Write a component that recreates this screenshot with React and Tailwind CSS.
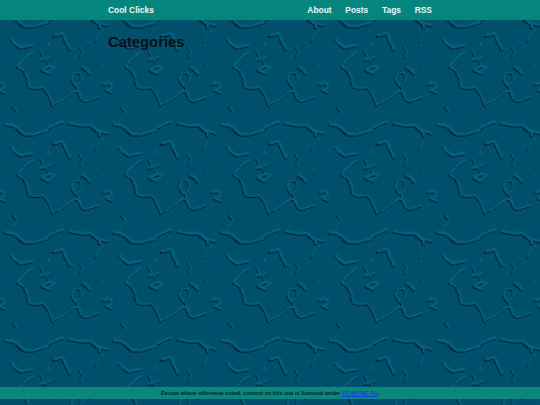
const LINES = [
  ["M6 124 Q12 124 17 127 Q21 131 25 134 L34 134 L44 131 Q50 126 56 124 L63 121", 2.8],
  ["M70 123 L80 125 L91 125 Q96 128 100 134", 2.8],
  ["M13 39 Q16 45 21 47 L33 45", 3],
  ["M33 52 L25 58 L18 66 L23 70 Q26 74 28 78", 2.4],
  ["M28 78 L29 84 Q31 88 36 88 L43 87 Q47 90 49 95 L53 105 L59 102 L68 96 L74 91 L78 91 L82 99 L86 101 L98 97", 2],
  ["M41 51 L44 57 L41 60 L47 59 L50 56", 1.8],
  ["M42 69 L49 73 L55 67 L49 66 Z", 2.6],
  ["M47 60 L49 66", 1.2],
  ["M50 58 L58 52", 0.9],
  ["M55 35 L63 33 L66 41 L71 49", 2.6],
  ["M80 46 L82 51 L81 57", 1.8],
  ["M83 67 L87 69 L90 73", 3],
  ["M72 80 Q72 72 78 72 Q83 74 81 80 Q79 85 75 85 Z", 1.8],
  ["M77 85 L79 92", 1.6],
  ["M104 84 L111 82 L112 88 L107 90 L112 92", 2.6],
  ["M13 106 L17 112 L13 118 L10 125", 1.6],
  ["M93 20 L100 23 L108 25", 2.6],
  ["M103 30 L99 35 L96 41", 1.8],
  ["M96 62 L99 66", 0.7],
];
const OFFSETS = [
  [0, 0],
  [-108, 0],
  [108, 0],
  [0, -108],
  [0, 108],
];

function Layer({ dx, dy, color, extra }) {
  return (
    <g transform={`translate(${dx} ${dy})`} stroke={color}>
      {LINES.map(([d, w]) => (
        <path key={d} d={d} strokeWidth={w + extra} />
      ))}
    </g>
  );
}

function Tile() {
  return (
    <g filter="url(#rough)">
      {OFFSETS.map(([x, y]) => (
        <g key={`${x}-${y}`} transform={`translate(${x} ${y})`} fill="none" strokeLinecap="round" strokeLinejoin="round">
          <Layer dx={-0.8} dy={1.2} color="#01293d" extra={0.1} />
          <Layer dx={0} dy={0} color="#06607f" extra={0} />
          <circle cx="49" cy="44" r="1.6" fill="#076484" />
        </g>
      ))}
    </g>
  );
}

export default function App() {
  return (
    <div className="relative h-[405px] w-[540px] overflow-hidden bg-[#054f6c] font-['Liberation_Sans',Arial,sans-serif]">
      <svg className="absolute inset-0 h-full w-full" aria-hidden="true">
        <defs>
          <filter id="rough" x="-10%" y="-10%" width="120%" height="120%">
            <feTurbulence type="fractalNoise" baseFrequency="0.09" numOctaves="2" seed="4" stitchTiles="stitch" />
            <feDisplacementMap in="SourceGraphic" scale="2.5" xChannelSelector="R" yChannelSelector="G" />
          </filter>
          <filter id="soft" x="0" y="0" width="100%" height="100%">
            <feGaussianBlur stdDeviation="0.4" />
          </filter>
          <filter id="grain" x="0" y="0" width="100%" height="100%">
            <feTurbulence type="fractalNoise" baseFrequency="0.5" numOctaves="2" seed="7" />
            <feColorMatrix type="matrix" values="0 0 0 0 0  0 0 0 0 0.1  0 0 0 0 0.15  0 0 0 0.9 -0.32" />
          </filter>
          <pattern id="tile" width="108" height="108" patternUnits="userSpaceOnUse">
            <rect width="108" height="108" fill="#054f6c" />
            <Tile />
          </pattern>
        </defs>
        <rect width="540" height="405" fill="url(#tile)" filter="url(#soft)" />
        <rect width="540" height="405" filter="url(#grain)" opacity="0.35" />
      </svg>
      <div className="relative flex h-full flex-col">
        <header className="flex h-5 items-center justify-between bg-[#04857d] px-[108px] text-[8.44px] font-bold text-[#eefaf8]">
          <span>Cool Clicks</span>
          <nav className="flex gap-[13.7px]">
            <a>About</a>
            <a>Posts</a>
            <a>Tags</a>
            <a>RSS</a>
          </nav>
        </header>
        <main className="flex-1 pl-[108px] pt-[12px]">
          <h1 className="text-[14.8px] font-bold leading-5 text-[#01121b]">Categories</h1>
        </main>
        <footer className="mb-[6px] flex h-3 items-center justify-center bg-[#0a867b] text-[5.5px] font-bold text-[#03232b]">
          <span>
            Except where otherwise noted, content on this site is licensed under{" "}
            <a className="text-[#0b3fe0] underline">CC-BY-NC 4.0</a>.
          </span>
        </footer>
      </div>
    </div>
  );
}
